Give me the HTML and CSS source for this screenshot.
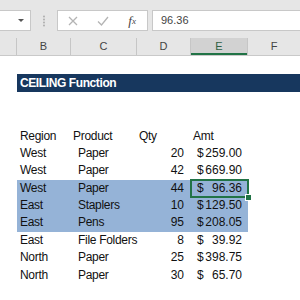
FILE: index.html
```html
<!DOCTYPE html>
<html>
<head>
<meta charset="utf-8">
<link rel="stylesheet" href="styles.css">
</head>
<body>
<div class="toolbar">
  <div class="namebox"><span class="caret"></span></div>
  <svg class="grip" width="6" height="12" viewBox="0 0 6 12"><circle cx="3" cy="1.5" r="0.9"/><circle cx="3" cy="4.5" r="0.9"/><circle cx="3" cy="7.5" r="0.9"/><circle cx="3" cy="10.5" r="0.9"/></svg>
  <div class="fxbox">
    <span class="btn"><svg width="10" height="10" viewBox="0 0 10 10"><path d="M1 1L9 9M9 1L1 9" stroke="#b4b4b4" stroke-width="1.3" fill="none"/></svg></span>
    <span class="btn"><svg width="12" height="10" viewBox="0 0 12 10"><path d="M1 5.5L4.5 9L11 1" stroke="#b4b4b4" stroke-width="1.3" fill="none"/></svg></span>
    <span class="btn fx"><i>f</i><sub>x</sub></span>
  </div>
  <div class="formula">96.36</div>
</div>
<div class="colheads">
  <div class="ch"></div>
  <div class="ch">B</div>
  <div class="ch">C</div>
  <div class="ch">D</div>
  <div class="ch sel">E</div>
  <div class="ch">F</div>
</div>
<div class="sheet">
  <div class="row tall"></div>
  <div class="row tall title"><div class="titlecell">CEILING Function</div></div>
  <div class="row blank"></div>
  <div class="row blank"></div>
  <div class="row"><div></div><div class="b">Region</div><div class="c">Product</div><div class="d">Qty</div><div class="e">Amt</div><div></div></div>
  <div class="row"><div></div><div class="b">West</div><div class="c v">Paper</div><div class="d n">20</div><div class="e m"><span>$</span><span>259.00</span></div><div></div></div>
  <div class="row"><div></div><div class="b">West</div><div class="c v">Paper</div><div class="d n">42</div><div class="e m"><span>$</span><span>669.90</span></div><div></div></div>
  <div class="row hl"><div></div><div class="b">West</div><div class="c v">Paper</div><div class="d n">44</div><div class="e m active"><span>$</span><span>96.36</span><i class="handle"></i></div><div></div></div>
  <div class="row hl"><div></div><div class="b">East</div><div class="c v">Staplers</div><div class="d n">10</div><div class="e m"><span>$</span><span>129.50</span></div><div></div></div>
  <div class="row hl"><div></div><div class="b">East</div><div class="c v">Pens</div><div class="d n">95</div><div class="e m"><span>$</span><span>208.05</span></div><div></div></div>
  <div class="row"><div></div><div class="b">East</div><div class="c v">File Folders</div><div class="d n">8</div><div class="e m"><span>$</span><span>39.92</span></div><div></div></div>
  <div class="row"><div></div><div class="b">North</div><div class="c v">Paper</div><div class="d n">25</div><div class="e m"><span>$</span><span>398.75</span></div><div></div></div>
  <div class="row"><div></div><div class="b">North</div><div class="c v">Paper</div><div class="d n">30</div><div class="e m"><span>$</span><span>65.70</span></div><div></div></div>
</div>
</body>
</html>
```
FILE: styles.css
```css
html, body {
  margin: 0;
  padding: 0;
}
body {
  width: 300px;
  height: 300px;
  overflow: hidden;
  background: #fff;
  font-family: "Liberation Sans", Arial, sans-serif;
  color: #111;
}
.toolbar {
  height: 38px;
  background: #e6e6e6;
  display: flex;
  align-items: flex-start;
  padding-top: 10px;
  box-sizing: border-box;
}
.namebox {
  width: 31px;
  height: 21px;
  box-sizing: border-box;
  background: #fff;
  border: 1px solid #c8c8c8;
  border-left: none;
  display: flex;
  justify-content: flex-end;
  align-items: center;
  padding-right: 6px;
}
.caret {
  width: 0;
  height: 0;
  border-left: 3px solid transparent;
  border-right: 3px solid transparent;
  border-top: 3px solid #555;
}
.grip {
  margin-left: 10px;
  margin-top: 5px;
  fill: #a8a8a8;
}
.fxbox {
  margin-left: 10px;
  width: 91px;
  height: 21px;
  box-sizing: border-box;
  background: #fff;
  border: 1px solid #c8c8c8;
  display: flex;
}
.btn {
  width: 30px;
  height: 19px;
  display: flex;
  align-items: center;
  justify-content: center;
}
.fx {
  font-family: "Liberation Serif", "Times New Roman", serif;
  color: #444;
  font-size: 13px;
}
.fx sub {
  font-style: italic;
  font-size: 9px;
  vertical-align: -2px;
}
.formula {
  margin-left: 4px;
  flex: 1;
  height: 21px;
  box-sizing: border-box;
  background: #fff;
  border: 1px solid #c8c8c8;
  border-right: none;
  font-size: 11px;
  color: #444;
  line-height: 19px;
  padding-left: 8px;
}
.colheads {
  height: 17px;
  background: #e6e6e6;
  border-bottom: 1px solid #c9c9c9;
  display: grid;
  grid-template-columns: 17px 54px 66px 54px 57px 1fr;
}
.ch {
  border-right: 1px solid #c6c6c6;
  font-size: 11px;
  color: #444;
  text-align: center;
  line-height: 17px;
}
.ch:last-child {
  border-right: none;
}
.ch.sel {
  background: #d2d2d2;
  box-shadow: inset 0 -2px 0 #217346;
  color: #2f5f42;
}
.sheet {
  font-size: 12px;
}
.row {
  display: grid;
  grid-template-columns: 17px 54px 66px 54px 57px 1fr;
  height: 17.375px;
  line-height: 17.375px;
  letter-spacing: -0.3px;
  white-space: nowrap;
}
.row.tall {
  height: 18px;
  line-height: 18px;
}
.row.blank {
  height: 17.75px;
}
.titlecell {
  grid-column: 2 / -1;
  background: #17375e;
  color: #fff;
  font-weight: bold;
  font-size: 12px;
  letter-spacing: -0.4px;
  padding-left: 3px;
}
.b { padding-left: 3px; }
.c { padding-left: 2px; }
.c.v { padding-left: 7px; }
.d { padding-left: 2px; }
.d.n { padding-left: 0; padding-right: 7px; text-align: right; letter-spacing: 0; }
.e { padding-left: 2px; }
.e.m {
  display: flex;
  justify-content: space-between;
  padding-left: 6px;
  padding-right: 6px;
  letter-spacing: 0;
}
.row.hl .b, .row.hl .c, .row.hl .d, .row.hl .e {
  background: #95b3d7;
}
.active {
  position: relative;
}
.active::after {
  content: "";
  position: absolute;
  left: -1px;
  top: -1px;
  right: -1px;
  bottom: -1px;
  border: 2px solid #217346;
}
.handle {
  position: absolute;
  right: -4px;
  bottom: -4px;
  width: 5px;
  height: 5px;
  background: #217346;
  border: 1px solid #fff;
  z-index: 1;
}
```
